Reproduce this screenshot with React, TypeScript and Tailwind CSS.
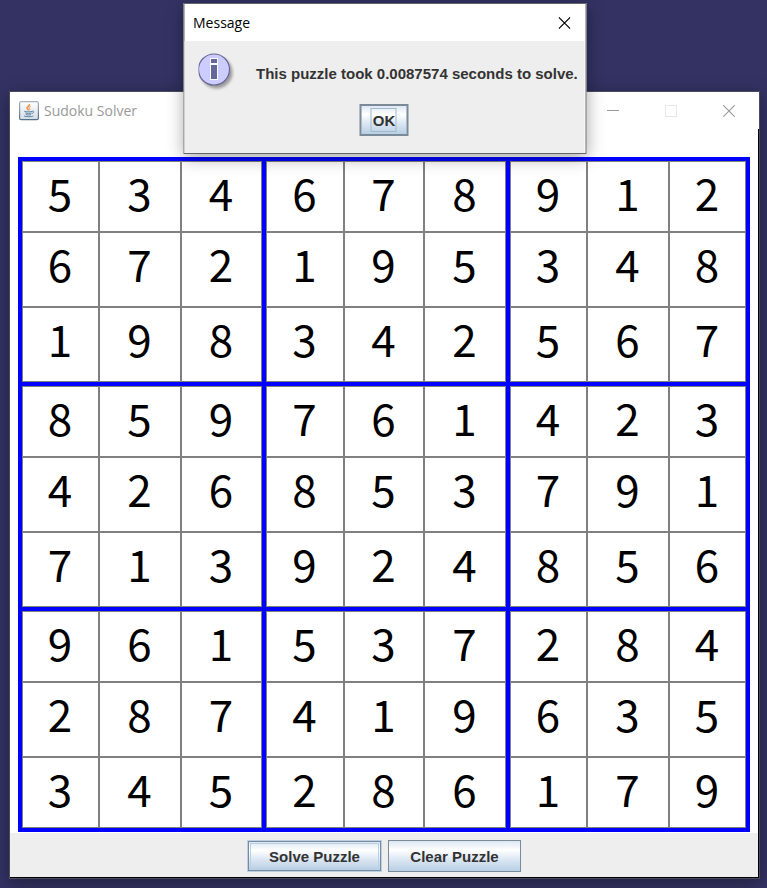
import { useState } from "react";

const SOLUTION: string[] = [
  "534678912",
  "672195348",
  "198342567",
  "859761423",
  "426853791",
  "713924856",
  "961537284",
  "287419635",
  "345286179",
];

const BOX_COLUMNS = [
  "grid-cols-[77fr_82fr_81fr]",
  "grid-cols-[78fr_80fr_82fr]",
  "grid-cols-[77fr_82fr_77fr]",
];

const BOX_ROWS = [
  "grid-rows-[71px_75px_75px]",
  "grid-rows-[71px_75px_75px]",
  "grid-rows-[71px_75px_71px]",
];

const METAL =
  "bg-[linear-gradient(to_bottom,#dde8f3_0%,#ffffff_30%,#dde8f3_60%,#b8cfe5_100%)] font-['Liberation_Sans',Arial,sans-serif] text-[15px] font-bold leading-5 text-[#333333]";

function CloseIcon() {
  return (
    <svg width="12" height="12" viewBox="0 0 12 12" fill="none" stroke="currentColor" strokeWidth="1.1" aria-hidden="true">
      <path d="M0.3 0.3 11.7 11.7M11.7 0.3 0.3 11.7" />
    </svg>
  );
}

function JavaIcon() {
  return (
    <svg width="20" height="20" viewBox="0 0 20 20" fill="none" aria-hidden="true">
      <defs>
        <linearGradient id="tile" x1="0" y1="0" x2="0" y2="1">
          <stop offset="0" stopColor="#ffffff" />
          <stop offset="1" stopColor="#d5dce3" />
        </linearGradient>
        <linearGradient id="edge" x1="0" y1="0" x2="0" y2="1">
          <stop offset="0" stopColor="#a9b4be" />
          <stop offset="1" stopColor="#52718c" />
        </linearGradient>
      </defs>
      <rect x="0.6" y="0.6" width="18.8" height="18" rx="1.6" fill="url(#tile)" stroke="url(#edge)" strokeWidth="1.2" />
      <path d="M10.3 3c1 2-3 2.6-2.2 4.4.3.8 1.2 1.200 1.500 2" stroke="#ee9249" strokeWidth="1.5" />
      <path d="M11.8 5.2c-2 .9-2.2 1.7-1.3 2.5.5.5.2 1-.2 1.5" stroke="#ee9249" strokeWidth="1" />
      <path d="M5.3 10.3c2.3.7 5.5.7 8 0M13.2 10.2c2.4-.6 2 1.8-.5 2.3M6.2 11.9c2 .7 4.5.7 6.2 0M6.8 13.5c1.8.6 3.8.6 5.2 0M5 15c2.3.9 7.2.9 9.2 0" stroke="#5c85a6" strokeWidth="1" />
    </svg>
  );
}

function InfoIcon() {
  return (
    <svg width="40" height="40" viewBox="0 0 40 40" aria-hidden="true">
      <defs>
        <filter id="soft" x="-20%" y="-20%" width="140%" height="140%">
          <feGaussianBlur stdDeviation="1.5" />
        </filter>
      </defs>
      <circle cx="18" cy="19.5" r="16" fill="#000000" opacity="0.35" filter="url(#soft)" />
      <circle cx="15.5" cy="16.5" r="15.5" fill="#ccccff" stroke="#666699" strokeWidth="1.2" />
      <path d="M11.5 5h8v22h-8z" fill="#ffffff" opacity="0.85" />
      <path d="M12.5 6h6v4h-6zM12.5 12h6v14h-6z" fill="#666699" />
    </svg>
  );
}

function Cell({ row, col }: { row: number; col: number }) {
  const [value, setValue] = useState(SOLUTION[row][col]);
  return (
    <div className="min-w-0 border border-[#808080] bg-white">
      <input
        type="text"
        maxLength={1}
        aria-label={`Row ${row + 1}, column ${col + 1}`}
        value={value}
        onChange={(event) => setValue(event.target.value)}
        className="block h-[60px] w-full bg-transparent pr-px text-center font-['Noto_Sans_CJK_SC',sans-serif] text-[44px] leading-[60px] text-black outline-none"
      />
    </div>
  );
}

function Board() {
  return (
    <div className="grid grid-cols-[240fr_240fr_236fr] gap-1 bg-[#0000ff] p-1">
      {[0, 1, 2].map((boxRow) =>
        [0, 1, 2].map((boxCol) => (
          <div key={`${boxRow}-${boxCol}`} className={`grid ${BOX_COLUMNS[boxCol]} ${BOX_ROWS[boxRow]}`}>
            {[0, 1, 2].map((r) =>
              [0, 1, 2].map((c) => <Cell key={`${r}-${c}`} row={boxRow * 3 + r} col={boxCol * 3 + c} />)
            )}
          </div>
        ))
      )}
    </div>
  );
}

function MessageDialog() {
  return (
    <div
      role="dialog"
      aria-labelledby="dialog-title"
      className="absolute -top-[89px] left-1/2 w-[403px] -translate-x-1/2 border border-[#666666] bg-white shadow-[0_4px_16px_rgba(0,0,0,0.35)]"
    >
      <div className="flex h-[37px] items-center justify-between pl-[9px] pr-[15px]">
        <h2 id="dialog-title" className="font-['Open_Sans','Noto_Sans',sans-serif] text-[14px] leading-5 text-black">
          Message
        </h2>
        <button type="button" aria-label="Close message" className="text-black">
          <CloseIcon />
        </button>
      </div>
      <div className="mr-px h-[112px] bg-[#eeeeee] pt-3">
        <div className="flex h-10 items-center pl-[14px]">
          <InfoIcon />
          <p className="ml-[18px] whitespace-nowrap pt-px font-['Liberation_Sans',Arial,sans-serif] text-[15px] font-bold leading-5 text-[#333333]">
            This puzzle took 0.0087574 seconds to solve.
          </p>
        </div>
        <div className="flex justify-center pr-px pt-[11px]">
          <button type="button" className={`flex h-8 w-[49px] items-center justify-center border-2 border-[#7a8a99] ${METAL}`}>
            <span className="border border-[#a3b8cc] pl-px pt-[2px]">OK</span>
          </button>
        </div>
      </div>
    </div>
  );
}

export default function App() {
  return (
    <div className="min-h-screen bg-[#333263] pb-[9px] pl-[9px] pr-[7px] pt-[91px]">
      <main className="relative border border-[#4b4b5e] bg-white shadow-[0_4px_16px_rgba(0,0,0,0.35)]">
        <header className="flex h-[37px] items-center justify-between pl-[9px] pr-6 text-[#999999]">
          <div className="flex items-center gap-[5px]">
            <JavaIcon />
            <h1 className="font-['Open_Sans','Noto_Sans',sans-serif] text-[14px] leading-5">Sudoku Solver</h1>
          </div>
          <div className="flex items-center gap-[46px]">
            <button type="button" aria-label="Minimize">
              <svg width="12" height="12" viewBox="0 0 12 12" aria-hidden="true">
                <path d="M0 5h12v1H0z" fill="currentColor" />
              </svg>
            </button>
            <button type="button" aria-label="Maximize" disabled className="text-[#e6e6e6]">
              <svg width="12" height="12" viewBox="0 0 12 12" fill="none" stroke="currentColor" aria-hidden="true">
                <rect x="0.5" y="0.5" width="11" height="11" />
              </svg>
            </button>
            <button type="button" aria-label="Close">
              <CloseIcon />
            </button>
          </div>
        </header>
        <div className="border-b border-r border-black">
          <div className="px-2 pb-px pt-7">
            <Board />
          </div>
          <div className="flex h-11 justify-center gap-[6px] bg-[#eeeeee] pt-[7px]">
            <button type="button" className="h-8 w-[135px] border border-[#b8cfe5]">
              <span className={`flex h-full items-center justify-center border border-[#7a8a99] p-px ${METAL}`}>
                <span className="flex h-full w-full items-center justify-center border border-[#b8cfe5] pt-[2px]">Solve Puzzle</span>
              </span>
            </button>
            <button type="button" className={`h-8 w-[133px] border border-[#7a8a99] pt-[2px] ${METAL}`}>
              Clear Puzzle
            </button>
          </div>
        </div>
        <MessageDialog />
      </main>
    </div>
  );
}
